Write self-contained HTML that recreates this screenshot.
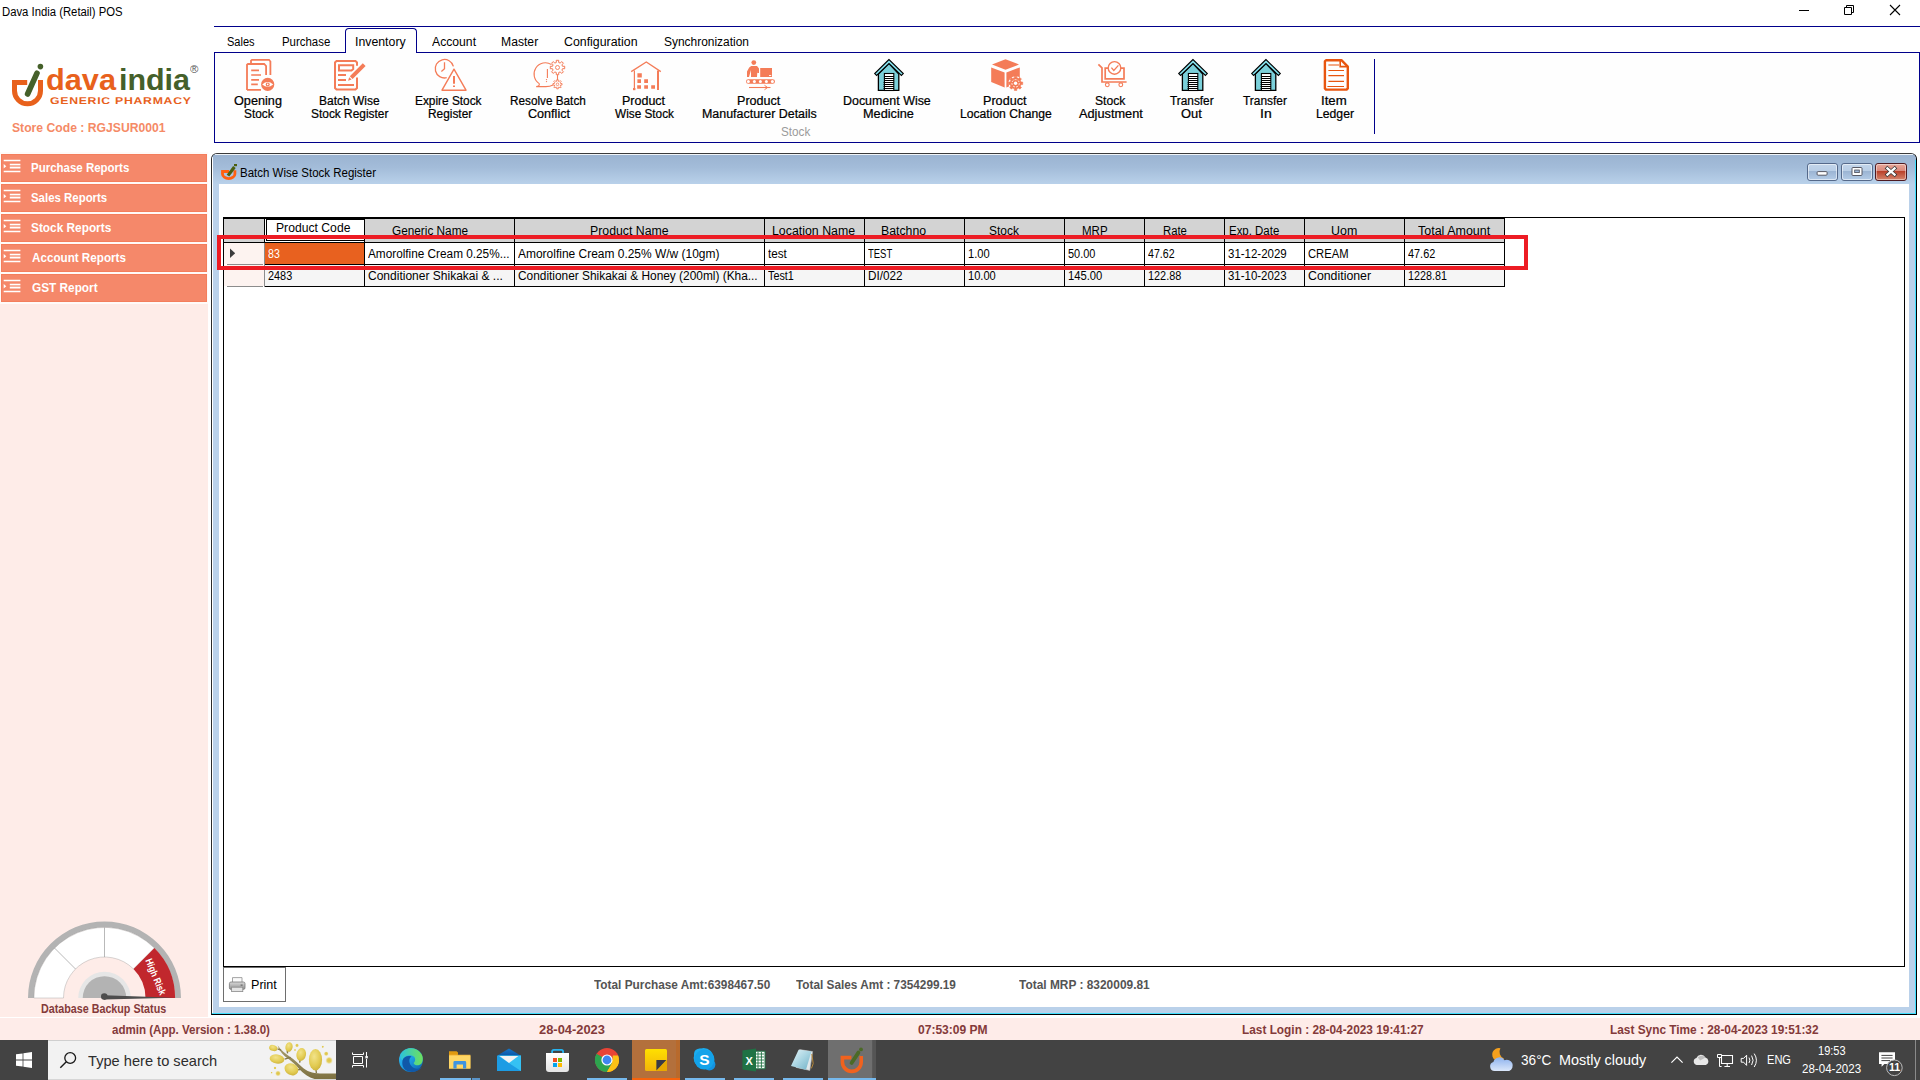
<!DOCTYPE html>
<html lang="en">
<head>
<meta charset="utf-8">
<title>Dava India (Retail) POS</title>
<style>
*{box-sizing:border-box;margin:0;padding:0}
html,body{width:1920px;height:1080px;overflow:hidden;background:#fff}
body{position:relative;font-family:'Liberation Sans',sans-serif;font-size:12px;color:#000}
div,span,svg{position:absolute}
.t{white-space:pre;line-height:1;transform-origin:0 0;display:block}
svg{overflow:visible}
/* title bar */
#titlebar{left:0;top:0;width:1920px;height:26px;background:#fff}
/* ribbon */
#ribbon{left:214px;top:26px;width:1706px;height:117px}
#ribbon .topline{left:0;top:0;width:1706px;height:1px;background:#00008b}
#ribbon .panel{left:0;top:26px;width:1706px;height:91px;border:1px solid #00008b;background:#fefefe}
#ribbon .tabsel{left:131px;top:2px;width:72px;height:25px;border:1px solid #00008b;border-bottom:none;border-radius:4px 4px 0 0;background:#fefefe}
#ribbon .sep{left:1160px;top:33px;width:1px;height:75px;background:#00008b}
/* sidebar */
#sidebar{left:0;top:152px;width:208px;height:865px;background:#feece8}
#sidebar .topfill{left:0;top:0;width:208px;height:152px;background:#fffaf8}
.navbtn{left:1px;width:206px;height:28px;background:#f5886a;border:1px solid #f47e5c}
/* mdi */
#mdi{left:211px;top:153px;width:1706px;height:862px;border:1px solid #000;border-top-color:#3b3b3b;border-left-color:#2b2b2b;border-radius:6px 6px 0 0;background:#bad1ea;overflow:hidden}
#mdi .cap{left:0;top:0;width:1704px;height:30px;background:linear-gradient(#9ab3d1 0%,#a3bcd9 45%,#b9d1ea 100%)}
#mdi .hl{left:3px;top:0;width:1698px;height:1px;background:rgba(255,255,255,.85)}
#mdi .hl-l{left:0;top:3px;width:1px;height:858px;background:#fff}
#mdi .cy-r{right:0;top:6px;width:1px;height:856px;background:#3fe0ff}
#mdi .cy-b{left:0;bottom:0;width:1704px;height:1px;background:#3fe0ff}
#mdi .client{left:7px;top:30px;width:1690px;height:823px;background:#fff}
/* grid */
#grid{left:4px;top:33px;width:1682px;height:750px;border:1px solid #000;background:#fff}
.hc{top:1px;height:23px;background:#d3d3d3;border-right:1px solid #000}
.cell{height:21px;border-right:1px solid #000}
/* status */
#status{left:0;top:1018px;width:1920px;height:22px;background:#feece9}
/* taskbar */
#taskbar{left:0;top:1040px;width:1920px;height:40px;background:#434343}
#search{left:48px;top:0;width:288px;height:40px;background:#f2f2f2;border-top:1px solid #cfcfcf;border-bottom:1px solid #d6d6d6;overflow:hidden}
.run{top:38px;height:2px;background:#76b9ed}

</style>
</head>
<body>
<div id="titlebar">
<span class="t" style="left:2.00px;top:6.00px;font-size:12px;transform:scaleX(0.9421);">Dava India (Retail) POS</span>
<svg style="left:1790px;top:0px" width="120" height="22" viewBox="1790 0 120 22" ><path d="M1799 10.5h10" stroke="#000" stroke-width="1" fill="none"/><path d="M1844.5 7.5h7v7h-7zM1846.5 7.5v-2h7v7h-2" stroke="#000" stroke-width="1" fill="none"/><path d="M1890 5l10 10M1900 5l-10 10" stroke="#000" stroke-width="1.1" fill="none"/></svg>
</div>
<div id="logo" style="left:0;top:56px;width:212px;height:86px">
<svg style="left:8px;top:4px" width="40" height="50" viewBox="8 60 40 50" ><path d="M27.2 82.5H14.5V90.8A13 13 0 0 0 40.5 90.8V80" fill="none" stroke="#e8611c" stroke-width="5"/><path d="M27.6 94L37 73.2" fill="none" stroke="#45602a" stroke-width="5.6" stroke-linecap="round"/><circle cx="40.4" cy="66.6" r="2.8" fill="#45602a"/></svg>
<span class="t" style="left:46.10px;top:8.85px;font-size:29.5px;font-weight:700;color:#e8611c;transform:scaleX(1.0414);">dava</span>
<span class="t" style="left:118.68px;top:8.85px;font-size:29.5px;font-weight:700;color:#45602a;transform:scaleX(1.0312);">india</span>
<span class="t" style="left:49.79px;top:41.00px;font-size:9.8px;font-weight:700;color:#e8611c;letter-spacing:0.582px;transform:scale(1.2500,1.0000);text-rendering:geometricPrecision;">GENERIC PHARMACY</span>
<span class="t" style="left:190.19px;top:9.30px;font-size:10px;color:#555;transform:scaleX(1.1400);">®</span>
<span class="t" style="left:12.05px;top:65.45px;font-size:13.3px;font-weight:700;color:#f58a66;transform:scaleX(0.9153);">Store Code : RGJSUR0001</span>
</div>
<div id="ribbon">
<div class="topline"></div>
<div class="panel"></div>
<div class="tabsel"></div>
<span class="t" style="left:13.11px;top:10.00px;font-size:12px;transform:scaleX(0.9208);">Sales</span>
<span class="t" style="left:67.99px;top:10.00px;font-size:12px;transform:scaleX(0.9513);">Purchase</span>
<span class="t" style="left:140.97px;top:10.00px;font-size:12px;transform:scaleX(1.0259);">Inventory</span>
<span class="t" style="left:218.07px;top:10.00px;font-size:12px;transform:scaleX(1.0152);">Account</span>
<span class="t" style="left:287.02px;top:10.00px;font-size:12px;transform:scaleX(1.0140);">Master</span>
<span class="t" style="left:350.27px;top:10.00px;font-size:12px;transform:scaleX(1.0305);">Configuration</span>
<span class="t" style="left:449.95px;top:10.00px;font-size:12px;transform:scaleX(0.9951);">Synchronization</span>
<div class="rb" style="left:19px;top:30px;width:51px;height:66px">
<svg style="left:10px;top:2px" width="34" height="34" viewBox="243 58 34 34" ><path d="M251 63.5V60.6L252 59.8H269L270.4 61.5V75" fill="none" stroke="#f47c58" stroke-width="1.8" /><path d="M247 90V64.8L248 64H264.2L266.1 66V75M247 89.8H261" fill="none" stroke="#f47c58" stroke-width="1.8" /><path d="M251.2 70.3H259M251.2 75H261M251.2 79.8H259M251.2 84.3H257.8" fill="none" stroke="#f47c58" stroke-width="1.7" /><circle cx="267.7" cy="84.4" r="6.6" fill="#f47c58"/><path d="M262.2 84.4Q267.7 79.6 273.2 84.4Q267.7 89.2 262.2 84.4Z" fill="#fff"/><circle cx="267.7" cy="84.4" r="2" fill="#f47c58"/><circle cx="267.7" cy="84.4" r="0.8" fill="#fff"/></svg>
<span class="t" style="left:1.41px;top:38.70px;font-size:12px;-webkit-text-stroke:0.22px #000;transform:scaleX(1.0565);">Opening</span>
<span class="t" style="left:10.75px;top:51.70px;font-size:12px;-webkit-text-stroke:0.22px #000;transform:scaleX(0.9877);">Stock</span>
</div>
<div class="rb" style="left:95px;top:30px;width:81px;height:66px">
<svg style="left:24px;top:2px" width="34" height="34" viewBox="333 58 34 34" ><path d="M357 65.8V62.5L355.5 61H336.5L335 62.5V88L336.5 89.5H355.5L357 88V77.4" fill="none" stroke="#f47c58" stroke-width="2" /><path d="M339 65.2H353.2V69L351.5 70.5H339Z" fill="none" stroke="#f47c58" stroke-width="2" /><path d="M338 75H346M338 80H346M338 85H354" fill="none" stroke="#f47c58" stroke-width="2" /><path d="M349.8 76.2L362.8 63.2L365.6 66L352.6 79Z" fill="#f47c58" /><path d="M349.2 77.2L351.6 79.6L348.1 80.8Z" fill="#f47c58" /></svg>
<span class="t" style="left:9.96px;top:38.70px;font-size:12px;-webkit-text-stroke:0.22px #000;transform:scaleX(0.9993);">Batch Wise</span>
<span class="t" style="left:1.96px;top:51.70px;font-size:12px;-webkit-text-stroke:0.22px #000;transform:scaleX(0.9928);">Stock Register</span>
</div>
<div class="rb" style="left:200px;top:30px;width:70px;height:66px">
<svg style="left:21px;top:2px" width="34" height="34" viewBox="435 58 34 34" ><path d="M453.4 66.3A9.25 9.25 0 1 0 446.7 77.7" fill="none" stroke="#f47c58" stroke-width="1.3" /><path d="M444.5 62.2V68.8L441.4 71.5" fill="none" stroke="#f47c58" stroke-width="1.3" /><path d="M454 69.2L442 90.2H466L454 69.2Z" fill="none" stroke="#f47c58" stroke-width="1.4" stroke-linejoin="round"/><path d="M454 76V83.8" fill="none" stroke="#f47c58" stroke-width="2" /><path d="M454 85.6V87" fill="none" stroke="#f47c58" stroke-width="2" /></svg>
<span class="t" style="left:1.08px;top:38.70px;font-size:12px;-webkit-text-stroke:0.22px #000;transform:scaleX(0.9877);">Expire Stock</span>
<span class="t" style="left:13.89px;top:51.70px;font-size:12px;-webkit-text-stroke:0.22px #000;transform:scaleX(0.9889);">Register</span>
</div>
<div class="rb" style="left:295px;top:30px;width:79px;height:66px">
<svg style="left:23px;top:2px" width="34" height="34" viewBox="532 58 34 34" ><path d="M551.5 64.6A11.3 11.3 0 0 0 539.2 83.6Q540 86 536.2 86.6H544Q549.5 87 553 85" fill="none" stroke="#f47c58" stroke-width="1.1" /><path d="M547.4 69V78" fill="none" stroke="#f47c58" stroke-width="1.1" /><circle cx="546.5" cy="79.6" r=".7" fill="#f47c58"/><circle cx="546.5" cy="81.6" r=".7" fill="#f47c58"/><path d="M564.69 66.24L564.69 68.76L562.57 68.63L561.89 70.29L563.47 71.70L561.70 73.47L560.29 71.89L558.63 72.57L558.76 74.69L556.24 74.69L556.37 72.57L554.71 71.89L553.30 73.47L551.53 71.70L553.11 70.29L552.43 68.63L550.31 68.76L550.31 66.24L552.43 66.37L553.11 64.71L551.53 63.30L553.30 61.53L554.71 63.11L556.37 62.43L556.24 60.31L558.76 60.31L558.63 62.43L560.29 63.11L561.70 61.53L563.47 63.30L561.89 64.71L562.57 66.37Z" fill="none" stroke="#f47c58" stroke-width="1" stroke-linejoin="round"/><circle cx="557.5" cy="67.5" r="2" fill="none" stroke="#f47c58" stroke-width=".9"/><path d="M557.5 74.8V80" fill="none" stroke="#f47c58" stroke-width="1.1" /><path d="M562.03 83.51L562.03 85.09L560.62 85.00L560.20 86.01L561.26 86.95L560.15 88.06L559.21 87.00L558.20 87.42L558.29 88.83L556.71 88.83L556.80 87.42L555.79 87.00L554.85 88.06L553.74 86.95L554.80 86.01L554.38 85.00L552.97 85.09L552.97 83.51L554.38 83.60L554.80 82.59L553.74 81.65L554.85 80.54L555.79 81.60L556.80 81.18L556.71 79.77L558.29 79.77L558.20 81.18L559.21 81.60L560.15 80.54L561.26 81.65L560.20 82.59L560.62 83.60Z" fill="none" stroke="#f47c58" stroke-width="0.9" stroke-linejoin="round"/><circle cx="557.5" cy="84.3" r="1.3" fill="none" stroke="#f47c58" stroke-width=".8"/></svg>
<span class="t" style="left:1.10px;top:38.70px;font-size:12px;-webkit-text-stroke:0.22px #000;transform:scaleX(0.9796);">Resolve Batch</span>
<span class="t" style="left:18.62px;top:51.70px;font-size:12px;-webkit-text-stroke:0.22px #000;transform:scaleX(1.0500);">Conflict</span>
</div>
<div class="rb" style="left:399px;top:30px;width:63px;height:66px">
<svg style="left:17px;top:2px" width="34" height="34" viewBox="630 58 34 34" ><path d="M631.2 71.6L646.3 62L660.8 71.6" fill="none" stroke="#f47c58" stroke-width="1.3" /><path d="M634.4 70.4V90" fill="none" stroke="#f47c58" stroke-width="1.2" /><path d="M658 70.4V90" fill="none" stroke="#f47c58" stroke-width="2" /><path d="M637.4 73.2H641.8V77.6H637.4ZM637.4 79.2H641V83H637.4ZM644.2 79.2H648V83H644.2ZM637.2 85.2H641V88.8H637.2ZM644.2 85.2H648V88.8H644.2ZM651.2 85.2H655V88.8H651.2Z" fill="#f47c58" /><path d="M633 88h2.4v2.2H633z" fill="#f47c58" /></svg>
<span class="t" style="left:8.99px;top:38.70px;font-size:12px;-webkit-text-stroke:0.22px #000;transform:scaleX(1.0413);">Product</span>
<span class="t" style="left:1.77px;top:51.70px;font-size:12px;-webkit-text-stroke:0.22px #000;transform:scaleX(0.9823);">Wise Stock</span>
</div>
<div class="rb" style="left:486px;top:30px;width:118px;height:66px">
<svg style="left:45px;top:2px" width="34" height="34" viewBox="745 58 34 34" ><circle cx="753.8" cy="62.6" r="2.4" fill="#f47c58"/><path d="M751.2 66H757L759 68.5V73H757.4V70.5L757 77H751V70L749 77H747V71.5L749.2 67.4Z" fill="#f47c58" /><path d="M760.2 68H772V77H760.2Z" fill="#f47c58" /><rect x="769" y="75" width="2.2" height=".9" fill="#fff"/><rect x="746" y="79.2" width="29" height="4.6" rx="2.3" fill="#f47c58"/><circle cx="748.4" cy="81.4" r="1.5" fill="#fff"/><circle cx="754.4" cy="81.4" r="1.5" fill="#fff"/><circle cx="760.4" cy="81.4" r="1.5" fill="#fff"/><circle cx="766.4" cy="81.4" r="1.5" fill="#fff"/><circle cx="772.4" cy="81.4" r="1.5" fill="#fff"/><path d="M749 87.5H770.5" fill="none" stroke="#f47c58" stroke-width="1.1" /><path d="M764.5 85.3L767.6 87.5L764.5 89.7" fill="none" stroke="#f47c58" stroke-width="1" /></svg>
<span class="t" style="left:36.77px;top:38.70px;font-size:12px;-webkit-text-stroke:0.22px #000;transform:scaleX(1.0471);">Product</span>
<span class="t" style="left:1.87px;top:51.70px;font-size:12px;-webkit-text-stroke:0.22px #000;transform:scaleX(1.0365);">Manufacturer Details</span>
</div>
<div class="rb" style="left:628px;top:30px;width:91px;height:66px">
<svg style="left:31px;top:2px" width="34" height="34" viewBox="873 58 34 34" ><g transform="translate(0 0)"><path d="M878.4 74V90.4H898.8V74L889 63.6Z" fill="#7bd0da" stroke="#000" stroke-width="1.3" stroke-linejoin="miter"/><path d="M889 59.5L874.7 73.6L876.6 75.5L889 63.4L901.4 75.5L903.3 73.6Z" fill="#86e2ee" stroke="#000" stroke-width="1.1" stroke-linejoin="miter"/><rect x="884.4" y="73.5" width="9.4" height="17" fill="#fff" stroke="#000" stroke-width="1.1"/><path d="M884.2 76.5H894M884.2 78.5H894M884.2 80.5H894M883.6 82.5H894M883.6 84.5H894M883.6 86.5H894M883.6 88.5H894" stroke="#000" stroke-width="1" fill="none"/></g></svg>
<span class="t" style="left:1.39px;top:38.70px;font-size:12px;-webkit-text-stroke:0.22px #000;transform:scaleX(1.0364);">Document Wise</span>
<span class="t" style="left:20.86px;top:51.70px;font-size:12px;-webkit-text-stroke:0.22px #000;transform:scaleX(1.0587);">Medicine</span>
</div>
<div class="rb" style="left:744px;top:30px;width:95px;height:66px">
<svg style="left:32px;top:2px" width="34" height="34" viewBox="990 58 34 34" ><path d="M992 64.5L1005.5 59.2L1019 64.5L1005.5 69.8Z" fill="#f47c58" /><path d="M991.2 67.4L1004.6 72.6V87.6L991.2 82Z" fill="#f47c58" /><path d="M1006.4 72.6L1019.8 67.4V82L1006.4 87.6Z" fill="#f47c58" /><circle cx="1015.6" cy="83.3" r="7.1" fill="#fff"/><path d="M1022.69 82.06L1022.69 84.54L1021.07 84.52L1020.33 86.30L1021.49 87.44L1019.74 89.19L1018.60 88.03L1016.82 88.77L1016.84 90.39L1014.36 90.39L1014.38 88.77L1012.60 88.03L1011.46 89.19L1009.71 87.44L1010.87 86.30L1010.13 84.52L1008.51 84.54L1008.51 82.06L1010.13 82.08L1010.87 80.30L1009.71 79.16L1011.46 77.41L1012.60 78.57L1014.38 77.83L1014.36 76.21L1016.84 76.21L1016.82 77.83L1018.60 78.57L1019.74 77.41L1021.49 79.16L1020.33 80.30L1021.07 82.08Z" fill="#f47c58" stroke="#f47c58" stroke-width="0.6" stroke-linejoin="round"/><circle cx="1015.6" cy="83.3" r="3.7" fill="none" stroke="#fff" stroke-width=".8" stroke-dasharray="2 1.2"/><circle cx="1015.6" cy="83.3" r="1.7" fill="#fff"/></svg>
<span class="t" style="left:24.56px;top:38.70px;font-size:12px;-webkit-text-stroke:0.22px #000;transform:scaleX(1.0511);">Product</span>
<span class="t" style="left:2.25px;top:51.70px;font-size:12px;-webkit-text-stroke:0.22px #000;transform:scaleX(1.0111);">Location Change</span>
</div>
<div class="rb" style="left:863px;top:30px;width:68px;height:66px">
<svg style="left:18px;top:2px" width="34" height="34" viewBox="1095 58 34 34" ><path d="M1098.4 64.4L1102 67.8V82H1126.6" fill="none" stroke="#f47c58" stroke-width="1.7" /><path d="M1105.2 68.2H1124V78.8H1105.2Z" fill="none" stroke="#f47c58" stroke-width="1.7" /><circle cx="1114.5" cy="67.9" r="6.3" fill="#fff" stroke="#f47c58" stroke-width="1.4"/><path d="M1111.4 67.6L1113.8 70.4L1118.4 65.4" fill="none" stroke="#f47c58" stroke-width="1.3" /><circle cx="1107.3" cy="84.8" r="1.9" fill="#fff" stroke="#f47c58" stroke-width="1.1"/><circle cx="1120.8" cy="84.8" r="1.9" fill="#fff" stroke="#f47c58" stroke-width="1.1"/></svg>
<span class="t" style="left:17.93px;top:38.70px;font-size:12px;-webkit-text-stroke:0.22px #000;transform:scaleX(1.0106);">Stock</span>
<span class="t" style="left:2.05px;top:51.70px;font-size:12px;-webkit-text-stroke:0.22px #000;transform:scaleX(1.0629);">Adjustment</span>
</div>
<div class="rb" style="left:954px;top:30px;width:48px;height:66px">
<svg style="left:9px;top:2px" width="34" height="34" viewBox="1177 58 34 34" ><g transform="translate(304 0)"><path d="M878.4 74V90.4H898.8V74L889 63.6Z" fill="#7bd0da" stroke="#000" stroke-width="1.3" stroke-linejoin="miter"/><path d="M889 59.5L874.7 73.6L876.6 75.5L889 63.4L901.4 75.5L903.3 73.6Z" fill="#86e2ee" stroke="#000" stroke-width="1.1" stroke-linejoin="miter"/><rect x="884.4" y="73.5" width="9.4" height="17" fill="#fff" stroke="#000" stroke-width="1.1"/><path d="M884.2 76.5H894M884.2 78.5H894M884.2 80.5H894M883.6 82.5H894M883.6 84.5H894M883.6 86.5H894M883.6 88.5H894" stroke="#000" stroke-width="1" fill="none"/></g></svg>
<span class="t" style="left:2.33px;top:38.70px;font-size:12px;-webkit-text-stroke:0.22px #000;transform:scaleX(0.9868);">Transfer</span>
<span class="t" style="left:12.96px;top:51.70px;font-size:12px;-webkit-text-stroke:0.22px #000;transform:scaleX(1.0747);">Out</span>
</div>
<div class="rb" style="left:1027px;top:30px;width:48px;height:66px">
<svg style="left:9px;top:2px" width="34" height="34" viewBox="1250 58 34 34" ><g transform="translate(377 0)"><path d="M878.4 74V90.4H898.8V74L889 63.6Z" fill="#7bd0da" stroke="#000" stroke-width="1.3" stroke-linejoin="miter"/><path d="M889 59.5L874.7 73.6L876.6 75.5L889 63.4L901.4 75.5L903.3 73.6Z" fill="#86e2ee" stroke="#000" stroke-width="1.1" stroke-linejoin="miter"/><rect x="884.4" y="73.5" width="9.4" height="17" fill="#fff" stroke="#000" stroke-width="1.1"/><path d="M884.2 76.5H894M884.2 78.5H894M884.2 80.5H894M883.6 82.5H894M883.6 84.5H894M883.6 86.5H894M883.6 88.5H894" stroke="#000" stroke-width="1" fill="none"/></g></svg>
<span class="t" style="left:2.13px;top:38.70px;font-size:12px;-webkit-text-stroke:0.22px #000;transform:scaleX(0.9936);">Transfer</span>
<span class="t" style="left:19.02px;top:51.70px;font-size:12px;-webkit-text-stroke:0.22px #000;transform:scaleX(1.1645);">In</span>
</div>
<div class="rb" style="left:1100px;top:30px;width:42px;height:66px">
<svg style="left:6px;top:2px" width="34" height="34" viewBox="1320 58 34 34" ><path d="M1341.4 60.2H1326L1324.9 61.4V88.4L1326 89.6H1346.6L1347.8 88.4V66.6Z" fill="none" stroke="#e8550f" stroke-width="2.4" stroke-linejoin="round"/><path d="M1340.2 60.4V66.6H1347.6" fill="none" stroke="#e8550f" stroke-width="1.6" /><path d="M1328.4 65H1339M1328.4 70.5H1344M1328.4 75.7H1344M1328.4 81.3H1344M1327.4 86.5H1344" fill="none" stroke="#e8550f" stroke-width="1.2" /></svg>
<span class="t" style="left:7.06px;top:38.70px;font-size:12px;-webkit-text-stroke:0.22px #000;transform:scaleX(1.1001);">Item</span>
<span class="t" style="left:2.22px;top:51.70px;font-size:12px;-webkit-text-stroke:0.22px #000;transform:scaleX(1.0174);">Ledger</span>
</div>
<span class="t" style="left:566.53px;top:100.00px;font-size:12px;color:#9a9a9a;transform:scaleX(0.9750);">Stock</span>
<div class="sep"></div>
</div>
<div id="sidebar">
<div class="topfill"></div>
<div class="navbtn" style="top:2px">
<svg style="left:1px;top:3px" width="18" height="16" viewBox="3 158 18 16" ><path d="M3.7 160.5 H20.4 M9.8 164.5 H20.4 M9.8 167.6 H20.4 M3.7 171.5 H20.4" stroke="#fff" stroke-width="1.6" fill="none"/><path d="M9.8 166 H20.4" stroke="#fff" stroke-opacity=".3" stroke-width="1" fill="none"/><path d="M3.7 163.9 L6.3 166.2 L3.7 168.5 Z" fill="#fff"/></svg>
<span class="t" style="left:28.93px;top:5.85px;font-size:13.3px;font-weight:700;color:#fff;transform:scaleX(0.8638);">Purchase Reports</span>
</div>
<div class="navbtn" style="top:32px">
<svg style="left:1px;top:3px" width="18" height="16" viewBox="3 188 18 16" ><path d="M3.7 190.5 H20.4 M9.8 194.5 H20.4 M9.8 197.6 H20.4 M3.7 201.5 H20.4" stroke="#fff" stroke-width="1.6" fill="none"/><path d="M9.8 196 H20.4" stroke="#fff" stroke-opacity=".3" stroke-width="1" fill="none"/><path d="M3.7 193.9 L6.3 196.2 L3.7 198.5 Z" fill="#fff"/></svg>
<span class="t" style="left:29.11px;top:5.85px;font-size:13.3px;font-weight:700;color:#fff;transform:scaleX(0.8594);">Sales Reports</span>
</div>
<div class="navbtn" style="top:62px">
<svg style="left:1px;top:3px" width="18" height="16" viewBox="3 218 18 16" ><path d="M3.7 220.5 H20.4 M9.8 224.5 H20.4 M9.8 227.6 H20.4 M3.7 231.5 H20.4" stroke="#fff" stroke-width="1.6" fill="none"/><path d="M9.8 226 H20.4" stroke="#fff" stroke-opacity=".3" stroke-width="1" fill="none"/><path d="M3.7 223.9 L6.3 226.2 L3.7 228.5 Z" fill="#fff"/></svg>
<span class="t" style="left:29.06px;top:5.85px;font-size:13.3px;font-weight:700;color:#fff;transform:scaleX(0.8902);">Stock Reports</span>
</div>
<div class="navbtn" style="top:92px">
<svg style="left:1px;top:3px" width="18" height="16" viewBox="3 248 18 16" ><path d="M3.7 250.5 H20.4 M9.8 254.5 H20.4 M9.8 257.6 H20.4 M3.7 261.5 H20.4" stroke="#fff" stroke-width="1.6" fill="none"/><path d="M9.8 256 H20.4" stroke="#fff" stroke-opacity=".3" stroke-width="1" fill="none"/><path d="M3.7 253.9 L6.3 256.2 L3.7 258.5 Z" fill="#fff"/></svg>
<span class="t" style="left:29.69px;top:5.85px;font-size:13.3px;font-weight:700;color:#fff;transform:scaleX(0.8768);">Account Reports</span>
</div>
<div class="navbtn" style="top:122px">
<svg style="left:1px;top:3px" width="18" height="16" viewBox="3 278 18 16" ><path d="M3.7 280.5 H20.4 M9.8 284.5 H20.4 M9.8 287.6 H20.4 M3.7 291.5 H20.4" stroke="#fff" stroke-width="1.6" fill="none"/><path d="M9.8 286 H20.4" stroke="#fff" stroke-opacity=".3" stroke-width="1" fill="none"/><path d="M3.7 283.9 L6.3 286.2 L3.7 288.5 Z" fill="#fff"/></svg>
<span class="t" style="left:29.58px;top:5.85px;font-size:13.3px;font-weight:700;color:#fff;transform:scaleX(0.8881);">GST Report</span>
</div>
<svg style="left:20px;top:763px" width="170" height="90" viewBox="20 915 170 90" ><path d="M28.00 998.00A76.5 76.5 0 0 1 181.00 998.00L175.00 998.00A70.5 70.5 0 0 0 34.00 998.00Z" fill="#b3b3b3" /><path d="M33.90 998.00A70.6 70.6 0 0 1 154.42 948.08L133.49 969.01A41 41 0 0 0 63.50 998.00Z" fill="#fff" stroke="#9a9a9a" stroke-width=".4"/><path d="M154.42 948.08A70.6 70.6 0 0 1 175.10 998.00L145.50 998.00A41 41 0 0 0 133.49 969.01Z" fill="#c1272d" /><path d="M75.51 969.01L54.65 948.15" stroke="#8a8a8a" stroke-width=".6"/><path d="M104.50 957.00L104.50 927.50" stroke="#8a8a8a" stroke-width=".6"/><path d="M78.20 998.00A26.3 26.3 0 0 1 130.80 998.00L104.50 998.00A0 0 0 0 0 104.50 998.00Z" fill="#e6e6e6" /><path d="M82.70 998.00A21.8 21.8 0 0 1 126.30 998.00L104.50 998.00A0 0 0 0 0 104.50 998.00Z" fill="#b3b3b3" /><path d="M104.5 995.2L174.5 997.8L104.5 999.6Z" fill="#4d4d4d"/><circle cx="104.3" cy="996.6" r="3.3" fill="#4d4d4d"/><text x="155.78" y="976.76" transform="rotate(67.5 155.78 976.76)" text-anchor="middle" font-family="'Liberation Sans',sans-serif" font-size="10" font-weight="700" fill="#fff" textLength="38.5" lengthAdjust="spacingAndGlyphs" dy="3.5">High Risk</text></svg>
<span class="t" style="left:41.08px;top:850.80px;font-size:12px;font-weight:700;color:#843a3a;transform:scaleX(0.8937);">Database Backup Status</span>
</div>
<div id="mdi">
<div class="cap"></div><div class="hl"></div><div class="hl-l"></div>
<div class="client">
<div id="grid">
<div style="left:0;top:0;width:1281px;height:1px;background:#000"></div>
<div class="hc" style="left:0px;width:41px">
</div>
<div class="hc" style="left:41px;width:100px">
<div style="left:0;top:0;width:99px;height:23px;background:#fff"></div>
<div style="left:1px;top:0;width:99px;height:22px;background:#fff;border:1px solid #000"></div>
<span class="t" style="left:11.03px;top:3.00px;font-size:12px;transform:scaleX(1.0141);">Product Code</span>
</div>
<div class="hc" style="left:141px;width:150px">
<span class="t" style="left:26.94px;top:5.70px;font-size:12px;transform:scaleX(0.9832);">Generic Name</span>
</div>
<div class="hc" style="left:291px;width:250px">
<span class="t" style="left:75.43px;top:5.70px;font-size:12px;transform:scaleX(1.0254);">Product Name</span>
</div>
<div class="hc" style="left:541px;width:100px">
<span class="t" style="left:7.19px;top:5.70px;font-size:12px;transform:scaleX(1.0300);">Location Name</span>
</div>
<div class="hc" style="left:641px;width:100px">
<span class="t" style="left:16.20px;top:5.70px;font-size:12px;transform:scaleX(1.0230);">Batchno</span>
</div>
<div class="hc" style="left:741px;width:100px">
<span class="t" style="left:23.92px;top:5.70px;font-size:12px;transform:scaleX(0.9966);">Stock</span>
</div>
<div class="hc" style="left:841px;width:80px">
<span class="t" style="left:16.51px;top:5.70px;font-size:12px;transform:scaleX(0.9608);">MRP</span>
</div>
<div class="hc" style="left:921px;width:80px">
<span class="t" style="left:17.88px;top:5.70px;font-size:12px;transform:scaleX(0.9438);">Rate</span>
</div>
<div class="hc" style="left:1001px;width:80px">
<span class="t" style="left:4.09px;top:5.70px;font-size:12px;transform:scaleX(0.9545);">Exp. Date</span>
</div>
<div class="hc" style="left:1081px;width:100px">
<span class="t" style="left:25.68px;top:5.70px;font-size:12px;transform:scaleX(1.0374);">Uom</span>
</div>
<div class="hc" style="left:1181px;width:100px">
<span class="t" style="left:13.13px;top:5.70px;font-size:12px;transform:scaleX(1.0408);">Total Amount</span>
</div>
<div style="left:0;top:24px;width:1281px;height:1px;background:#000"></div>
<div class="row" style="left:0;top:25px;width:1281px;height:22px">
<div style="left:0;top:0;width:40px;height:21px;background:#fdf3f0"></div>
<div style="left:40px;top:0;width:1px;height:22px;background:#8c8c8c"></div>
<div style="left:3px;top:21px;width:36px;height:1px;background:#8c8c8c"></div>
<svg style="left:5px;top:5px" width="8" height="12" viewBox="229 248 8 12" ><path d="M230 248.5l5.2 4.7-5.2 4.7z" fill="#3c3c3c"/></svg>
<div class="cell" style="left:41px;top:0;width:100px;background:#e8611f">
<span class="t" style="left:2.80px;top:4.80px;font-size:12px;color:#fff;transform:scaleX(0.8818);">83</span>
</div>
<div class="cell" style="left:141px;top:0;width:150px;background:#fff">
<span class="t" style="left:3.35px;top:4.80px;font-size:12px;transform:scaleX(0.9821);">Amorolfine Cream 0.25%...</span>
</div>
<div class="cell" style="left:291px;top:0;width:250px;background:#fff">
<span class="t" style="left:3.35px;top:4.80px;font-size:12px;transform:scaleX(0.9970);">Amorolfine Cream 0.25% W/w (10gm)</span>
</div>
<div class="cell" style="left:541px;top:0;width:100px;background:#fff">
<span class="t" style="left:3.19px;top:4.80px;font-size:12px;transform:scaleX(0.9757);">test</span>
</div>
<div class="cell" style="left:641px;top:0;width:100px;background:#fff">
<span class="t" style="left:3.47px;top:4.80px;font-size:12px;transform:scaleX(0.7902);">TEST</span>
</div>
<div class="cell" style="left:741px;top:0;width:100px;background:#fff">
<span class="t" style="left:2.72px;top:4.80px;font-size:12px;transform:scaleX(0.9264);">1.00</span>
</div>
<div class="cell" style="left:841px;top:0;width:80px;background:#fff">
<span class="t" style="left:3.12px;top:4.80px;font-size:12px;transform:scaleX(0.9122);">50.00</span>
</div>
<div class="cell" style="left:921px;top:0;width:80px;background:#fff">
<span class="t" style="left:3.38px;top:4.80px;font-size:12px;transform:scaleX(0.8851);">47.62</span>
</div>
<div class="cell" style="left:1001px;top:0;width:80px;background:#fff">
<span class="t" style="left:3.15px;top:4.80px;font-size:12px;transform:scaleX(0.9566);">31-12-2029</span>
</div>
<div class="cell" style="left:1081px;top:0;width:100px;background:#fff">
<span class="t" style="left:2.53px;top:4.80px;font-size:12px;transform:scaleX(0.9339);">CREAM</span>
</div>
<div class="cell" style="left:1181px;top:0;width:100px;background:#fff">
<span class="t" style="left:3.35px;top:4.80px;font-size:12px;transform:scaleX(0.9071);">47.62</span>
</div>
<div style="left:41px;top:21px;width:1240px;height:1px;background:#000"></div>
</div>
<div class="row" style="left:0;top:47px;width:1281px;height:22px">
<div style="left:0;top:0;width:40px;height:21px;background:#fdf3f0"></div>
<div style="left:40px;top:0;width:1px;height:22px;background:#8c8c8c"></div>
<div style="left:3px;top:21px;width:36px;height:1px;background:#8c8c8c"></div>
<div class="cell" style="left:41px;top:0;width:100px;background:#f5f5f5">
<span class="t" style="left:2.92px;top:5.00px;font-size:12px;transform:scaleX(0.9070);">2483</span>
</div>
<div class="cell" style="left:141px;top:0;width:150px;background:#f5f5f5">
<span class="t" style="left:3.34px;top:5.00px;font-size:12px;transform:scaleX(1.0011);">Conditioner Shikakai &amp; ...</span>
</div>
<div class="cell" style="left:291px;top:0;width:250px;background:#f5f5f5">
<span class="t" style="left:2.89px;top:5.00px;font-size:12px;transform:scaleX(0.9899);">Conditioner Shikakai &amp; Honey (200ml) (Kha...</span>
</div>
<div class="cell" style="left:541px;top:0;width:100px;background:#f5f5f5">
<span class="t" style="left:3.40px;top:5.00px;font-size:12px;transform:scaleX(0.9005);">Test1</span>
</div>
<div class="cell" style="left:641px;top:0;width:100px;background:#f5f5f5">
<span class="t" style="left:2.51px;top:5.00px;font-size:12px;transform:scaleX(0.9762);">DI/022</span>
</div>
<div class="cell" style="left:741px;top:0;width:100px;background:#f5f5f5">
<span class="t" style="left:2.74px;top:5.00px;font-size:12px;transform:scaleX(0.9233);">10.00</span>
</div>
<div class="cell" style="left:841px;top:0;width:80px;background:#f5f5f5">
<span class="t" style="left:2.72px;top:5.00px;font-size:12px;transform:scaleX(0.9361);">145.00</span>
</div>
<div class="cell" style="left:921px;top:0;width:80px;background:#f5f5f5">
<span class="t" style="left:2.81px;top:5.00px;font-size:12px;transform:scaleX(0.9070);">122.88</span>
</div>
<div class="cell" style="left:1001px;top:0;width:80px;background:#f5f5f5">
<span class="t" style="left:3.16px;top:5.00px;font-size:12px;transform:scaleX(0.9530);">31-10-2023</span>
</div>
<div class="cell" style="left:1081px;top:0;width:100px;background:#f5f5f5">
<span class="t" style="left:3.27px;top:5.00px;font-size:12px;transform:scaleX(1.0276);">Conditioner</span>
</div>
<div class="cell" style="left:1181px;top:0;width:100px;background:#f5f5f5">
<span class="t" style="left:2.83px;top:5.00px;font-size:12px;transform:scaleX(0.8964);">1228.81</span>
</div>
<div style="left:41px;top:21px;width:1240px;height:1px;background:#000"></div>
</div>
</div>
<div id="mark" style="left:-2px;top:51px;width:1311px;height:35px;border:4px solid #ed1c24"></div>
<div id="print" style="left:4px;top:783px;width:63px;height:35px;border:1px solid #6e6e6e;background:#fff">
<svg style="left:5px;top:8px" width="18" height="18" viewBox="229 976 18 18" ><linearGradient id="gp" x1="0" y1="0" x2="0" y2="1"><stop offset="0" stop-color="#d8d8d8"/><stop offset="1" stop-color="#8f8f8f"/></linearGradient><path d="M232.5 982.5V977.6H242V982.5" fill="#fafafa" stroke="#9a9a9a" stroke-width=".9"/><rect x="229.4" y="982" width="15.6" height="7.4" rx="1.6" fill="url(#gp)" stroke="#7a7a7a" stroke-width=".8"/><rect x="231.6" y="987.2" width="11.2" height="4.4" fill="#e4e4e4" stroke="#8a8a8a" stroke-width=".8"/><rect x="240.6" y="984.6" width="2" height="1" fill="#555"/></svg>
<span class="t" style="left:27.39px;top:10.80px;font-size:12px;transform:scaleX(1.0477);">Print</span>
</div>
<span class="t" style="left:374.91px;top:795.30px;font-size:12px;font-weight:700;color:#545454;transform:scaleX(0.9858);">Total Purchase Amt:6398467.50</span>
<span class="t" style="left:577.02px;top:795.30px;font-size:12px;font-weight:700;color:#545454;transform:scaleX(0.9824);">Total Sales Amt : 7354299.19</span>
<span class="t" style="left:800.42px;top:795.30px;font-size:12px;font-weight:700;color:#545454;transform:scaleX(0.9930);">Total MRP : 8320009.81</span>
</div>
<div class="cy-r"></div><div class="cy-b"></div>
<svg style="left:8px;top:8px" width="18" height="20" viewBox="220 162 18 20" ><path d="M229 171.5H222.5V174A6.2 4.6 0 0 0 234.9 174V170.2" fill="none" stroke="#ff6010" stroke-width="2.8"/><path d="M228 175.6L234.4 167" stroke="#4b5f0f" stroke-width="3.2" stroke-linecap="butt" fill="none"/><rect x="234" y="164" width="3" height="2.2" fill="#4b5f0f"/></svg>
<span class="t" style="left:28.09px;top:13.00px;font-size:12px;transform:scaleX(0.9575);">Batch Wise Stock Register</span>
<svg style="left:1594px;top:8px" width="102" height="20" viewBox="1806 162 102 20" ><linearGradient id="gb" x1="0" y1="0" x2="0" y2="1"><stop offset="0" stop-color="#c3d5ea"/><stop offset=".42" stop-color="#b9cee6"/><stop offset=".43" stop-color="#9ab3d2"/><stop offset="1" stop-color="#b5cde8"/></linearGradient><rect x="1807.5" y="163.5" width="30" height="17" rx="2.5" fill="url(#gb)" stroke="#55698a" stroke-width="1"/><rect x="1808.5" y="164.5" width="28" height="15" rx="1.8" fill="none" stroke="#fff" stroke-opacity=".55" stroke-width="1"/><rect x="1817.1" y="171.6" width="10" height="3.6" rx="1" fill="#fff" stroke="#4a4a55" stroke-width=".9"/><rect x="1841.5" y="163.5" width="31" height="17" rx="2.5" fill="url(#gb)" stroke="#55698a" stroke-width="1"/><rect x="1842.5" y="164.5" width="29" height="15" rx="1.8" fill="none" stroke="#fff" stroke-opacity=".55" stroke-width="1"/><rect x="1852" y="167.5" width="10" height="8" rx="1" fill="#fff" stroke="#4a4a55" stroke-width=".9"/><rect x="1854.7" y="170" width="4.6" height="2.6" fill="#9db6d6" stroke="#4a4a55" stroke-width=".8"/><linearGradient id="gx" x1="0" y1="0" x2="0" y2="1"><stop offset="0" stop-color="#e9a99b"/><stop offset=".45" stop-color="#d9867a"/><stop offset=".46" stop-color="#b9402a"/><stop offset="1" stop-color="#d78a72"/></linearGradient><rect x="1875.5" y="163.5" width="31" height="17" rx="2.5" fill="url(#gx)" stroke="#4d1a22" stroke-width="1"/><rect x="1876.5" y="164.5" width="29" height="15" rx="1.8" fill="none" stroke="#fff" stroke-opacity=".45" stroke-width="1"/><path d="M1887.4 168.4L1894.6 174.6M1894.6 168.4L1887.4 174.6" stroke="#3a3a3a" stroke-width="3.8" stroke-linecap="square" fill="none"/><path d="M1887.4 168.4L1894.6 174.6M1894.6 168.4L1887.4 174.6" stroke="#fff" stroke-width="2.2" stroke-linecap="square" fill="none"/></svg>
</div>
<div id="status">
<span class="t" style="left:111.76px;top:5.80px;font-size:12px;font-weight:700;color:#843a3a;transform:scaleX(0.9627);">admin (App. Version : 1.38.0)</span>
<span class="t" style="left:538.66px;top:5.80px;font-size:12px;font-weight:700;color:#843a3a;transform:scaleX(1.0741);">28-04-2023</span>
<span class="t" style="left:918.20px;top:5.80px;font-size:12px;font-weight:700;color:#843a3a;transform:scaleX(1.0042);">07:53:09 PM</span>
<span class="t" style="left:1241.89px;top:5.80px;font-size:12px;font-weight:700;color:#843a3a;transform:scaleX(0.9868);">Last Login : 28-04-2023 19:41:27</span>
<span class="t" style="left:1609.89px;top:5.80px;font-size:12px;font-weight:700;color:#843a3a;transform:scaleX(0.9872);">Last Sync Time : 28-04-2023 19:51:32</span>
</div>
<div id="taskbar">
<svg style="left:16px;top:12px" width="16" height="16" viewBox="16 1052 16 16" ><path d="M16 1054.3L22.6 1053.4V1059.6H16ZM23.4 1053.3L32 1052V1059.6H23.4ZM16 1060.4H22.6V1066.6L16 1065.7ZM23.4 1060.4H32V1068L23.4 1066.7Z" fill="#fff"/></svg>
<div id="search">
<svg style="left:10px;top:9px" width="20" height="20" viewBox="58 1050 20 20" ><circle cx="70.2" cy="1058" r="5.4" fill="none" stroke="#1a1a1a" stroke-width="1.3"/><path d="M66.3 1061.8L60.3 1067.8" stroke="#1a1a1a" stroke-width="1.4" fill="none"/></svg>
<span class="t" style="left:39.95px;top:11.60px;font-size:15px;color:#2d2d2d;transform:scaleX(0.9749);">Type here to search</span>
<svg style="left:218px;top:0px" width="70" height="39" viewBox="266 1041 70 39" ><radialGradient id="gbl" cx=".4" cy=".35" r=".75"><stop offset="0" stop-color="#f2e38a"/><stop offset=".6" stop-color="#e2cb52"/><stop offset="1" stop-color="#c9ae38"/></radialGradient><radialGradient id="gdot"><stop offset="0" stop-color="#dcc344"/><stop offset=".55" stop-color="#e3cd5e"/><stop offset="1" stop-color="#e9d97f" stop-opacity=".25"/></radialGradient><linearGradient id="gbr" x1="0" y1="0" x2="0" y2="1"><stop offset="0" stop-color="#a89d6c"/><stop offset="1" stop-color="#7c7040"/></linearGradient><path d="M277.6 1045.2C281 1050.5 285.5 1053.6 289.6 1056.4C294.6 1059.8 298.4 1063.6 302 1067C306.5 1071.2 312.5 1073.4 320 1073.5H336V1080H318.5C311 1078.6 304.5 1074.6 299.6 1069.4C295.8 1065.4 292.4 1061.6 288 1058.6C283.8 1055.8 279.6 1051.6 277.6 1045.2Z" fill="url(#gbr)"/><path d="M281 1050.2L277.6 1048.8M287.6 1053.4L287.2 1050.6M290.6 1057.4L284.6 1059.2M299.6 1062.6L300.2 1060M300.2 1069.6L297 1069.8M316.4 1073L316 1070" stroke="#857a4a" stroke-width="1.4" fill="none"/><ellipse cx="273.3" cy="1048" rx="4.3" ry="3" transform="rotate(18 273.3 1048)" fill="url(#gbl)"/><ellipse cx="289" cy="1047" rx="3.6" ry="4.9" transform="rotate(12 289 1047)" fill="url(#gbl)"/><ellipse cx="277" cy="1059" rx="7.4" ry="4.6" transform="rotate(8 277 1059)" fill="url(#gbl)"/><ellipse cx="301.2" cy="1054.5" rx="4.8" ry="6.5" transform="rotate(10 301.2 1054.5)" fill="url(#gbl)"/><ellipse cx="315.5" cy="1059.7" rx="6.6" ry="10.7" transform="rotate(0 315.5 1059.7)" fill="url(#gbl)"/><ellipse cx="291.4" cy="1069.3" rx="7.2" ry="5.8" transform="rotate(25 291.4 1069.3)" fill="url(#gbl)"/><circle cx="297" cy="1045.4" r="1.9" fill="url(#gdot)"/><circle cx="295" cy="1050" r="1.1" fill="url(#gdot)"/><circle cx="322.8" cy="1046.8" r="1.2" fill="url(#gdot)"/><circle cx="326.2" cy="1053.7" r="2.3" fill="url(#gdot)"/><circle cx="329.1" cy="1060.4" r="3.5" fill="url(#gdot)"/><circle cx="275" cy="1068" r="1.4" fill="url(#gdot)"/><circle cx="278" cy="1073.4" r="2.7" fill="url(#gdot)"/><circle cx="271.7" cy="1072.7" r="1" fill="url(#gdot)"/></svg>
</div>
<div class="ti" style="left:336px;top:0;width:48px;height:40px;"><svg style="left:0;top:0" width="48" height="40" viewBox="336 1040 48 40"><path d="M352.5 1052.5V1054.5H363.5V1052.5M352.5 1067.5V1065.5H363.5V1067.5M353.5 1056.5H362.5V1063.5H353.5ZM366.5 1052V1056M366.5 1059V1067.5" fill="none" stroke="#fff" stroke-width="1"/><rect x="365.4" y="1056" width="2.4" height="2.4" fill="#fff"/></svg></div>
<div class="ti" style="left:386px;top:0;width:49px;height:40px;"><svg style="left:0;top:0" width="49" height="40" viewBox="386 1040 49 40"><defs><linearGradient id="ge1" x1="0" y1="0" x2="1" y2="1"><stop offset="0" stop-color="#35c1f1"/><stop offset=".5" stop-color="#1b9de2"/><stop offset="1" stop-color="#0c59a4"/></linearGradient><linearGradient id="ge2" x1="0" y1="0" x2="1" y2="0"><stop offset="0" stop-color="#2cc3d9"/><stop offset="1" stop-color="#6ee15c"/></linearGradient></defs><circle cx="411" cy="1060" r="12" fill="url(#ge1)"/><path d="M400.5 1054.5C404 1048 412 1046.5 418 1050.5C423 1054 424 1059.5 421.5 1063.5C419.5 1066 414.5 1066 413.5 1063C416 1061 416 1056.5 411.5 1055.5C407 1054.6 403.5 1057 402.5 1060.5C400.5 1058.5 400 1056.5 400.5 1054.5Z" fill="url(#ge2)"/><path d="M402.5 1060.5C403.5 1057 407.5 1055.2 411.5 1056.5C409 1058 408.5 1062 411 1065.5C414 1069.5 419 1069.5 422 1067C419 1071.5 412 1073.5 406.5 1070.5C403 1068.5 401.8 1064.5 402.5 1060.5Z" fill="#1058a8"/></svg></div>
<div class="ti" style="left:435px;top:0;width:49px;height:40px;"><svg style="left:0;top:0" width="49" height="40" viewBox="435 1040 49 40"><path d="M449 1053.2H456.5L458 1054.8H470.4V1068.6H449Z" fill="#f5b93c"/><path d="M449 1051.2H456.6L458 1052.6V1054.8H449Z" fill="#e09a10"/><path d="M449 1055.6H470.4V1068.6H449Z" fill="#ffd766"/><path d="M453.4 1068.6V1062.4Q453.4 1061 454.8 1061H464.8Q466.2 1061 466.2 1062.4V1068.6H463V1064.4H456.6V1068.6Z" fill="#3f94e0"/></svg><div class="run" style="left:5px;width:31px;background:#76b9ed"></div></div>
<div class="run" style="left:472px;width:8px;background:#5a94c8"></div>
<div class="ti" style="left:484px;top:0;width:49px;height:40px;"><svg style="left:0;top:0" width="49" height="40" viewBox="484 1040 49 40"><linearGradient id="gm" x1="0" y1="0" x2="0" y2="1"><stop offset="0" stop-color="#1476c8"/><stop offset="1" stop-color="#0a55a6"/></linearGradient><path d="M509 1048.4L521 1055.8H497Z" fill="url(#gm)"/><path d="M497 1055.6H521V1071H497Z" fill="#1c9ce4"/><path d="M521 1055.6V1071L497.6 1055.6Z" fill="#35c1f3"/><path d="M499.6 1056H518.4L509 1063Z" fill="#f2f2f2"/></svg></div>
<div class="ti" style="left:533px;top:0;width:49px;height:40px;"><svg style="left:0;top:0" width="49" height="40" viewBox="533 1040 49 40"><path d="M552.1 1054.6V1051.6Q552.1 1049.9 553.8 1049.9H561.4Q563.1 1049.9 563.1 1051.6V1054.6" fill="none" stroke="#27b4f0" stroke-width="1.8"/><linearGradient id="gst" x1="0" y1="0" x2="0" y2="1"><stop offset="0" stop-color="#ffffff"/><stop offset="1" stop-color="#e4e4e4"/></linearGradient><path d="M546 1053H569V1069Q569 1072 566 1072H549Q546 1072 546 1069Z" fill="url(#gst)"/><rect x="553" y="1058" width="4" height="4" fill="#f25022"/><rect x="558" y="1058" width="4" height="4" fill="#7fba00"/><rect x="553" y="1063" width="4" height="4" fill="#00a4ef"/><rect x="558" y="1063" width="4" height="4" fill="#ffb900"/></svg></div>
<div class="ti" style="left:582px;top:0;width:49px;height:40px;"><svg style="left:0;top:0" width="49" height="40" viewBox="582 1040 49 40"><circle cx="607" cy="1060" r="12" fill="#e84436"/><path d="M607 1060L596.6 1054A12 12 0 0 0 601 1070.4Z" fill="#2da44e"/><path d="M607 1060L596.6 1054A12 12 0 0 0 607 1072L613 1061.6Z" fill="#2da44e"/><path d="M607 1060H619A12 12 0 0 1 607 1072L612.2 1063Z" fill="#fbc116"/><path d="M612.8 1055.6H618.2A12 12 0 0 1 607 1072L612.6 1062.6Z" fill="#fbc116"/><circle cx="607" cy="1060" r="5.6" fill="#fff"/><circle cx="607" cy="1060" r="4.4" fill="#3f86f0"/></svg><div class="run" style="left:5px;width:40px;background:#76b9ed"></div></div>
<div class="ti" style="left:632px;top:0;width:48px;height:40px;background:#b3703c;"><svg style="left:0;top:0" width="48" height="40" viewBox="632 1040 48 40"><rect x="676" y="1040" width="4" height="40" fill="#b86a2c"/><linearGradient id="gs" x1="0" y1="0" x2="0" y2="1"><stop offset="0" stop-color="#ffe000"/><stop offset="1" stop-color="#f2b40a"/></linearGradient><rect x="645" y="1049" width="22" height="22" rx="1.5" fill="url(#gs)"/><path d="M667 1060V1069.5Q667 1071 665.5 1071H656.4Z" fill="#e8a800"/><path d="M666.4 1060L656.4 1070.4V1060Z" fill="#3a3a46"/></svg><div class="run" style="left:0px;width:48px;background:#f7630c"></div></div>
<div class="ti" style="left:680px;top:0;width:49px;height:40px;"><svg style="left:0;top:0" width="49" height="40" viewBox="680 1040 49 40"><circle cx="703.6" cy="1058" r="10" fill="#1badf0"/><circle cx="699.6" cy="1054" r="5.6" fill="#1badf0"/><circle cx="709.4" cy="1064.6" r="6" fill="#1392e0"/><circle cx="704.4" cy="1059.6" r="10" fill="#14a3ea"/><text x="704.4" y="1065.4" text-anchor="middle" font-family="'Liberation Sans',sans-serif" font-weight="700" font-size="15.5" fill="#fff">S</text></svg><div class="run" style="left:5px;width:40px;background:#76b9ed"></div></div>
<div class="ti" style="left:729px;top:0;width:49px;height:40px;"><svg style="left:0;top:0" width="49" height="40" viewBox="729 1040 49 40"><rect x="752" y="1051.2" width="13" height="17.6" fill="#fff" stroke="#1f7244" stroke-width="1"/><path d="M755 1054H764M755 1057H764M755 1060H764M755 1063H764M755 1066H764M758 1052V1068M761.4 1052V1068" stroke="#1f7244" stroke-width=".9" fill="none"/><path d="M742.4 1050.6L756 1048.6V1071.6L742.4 1069.4Z" fill="#1f7244"/><text x="749.2" y="1064.6" text-anchor="middle" font-family="'Liberation Sans',sans-serif" font-weight="700" font-size="11" fill="#fff">X</text></svg><div class="run" style="left:5px;width:40px;background:#76b9ed"></div></div>
<div class="ti" style="left:778px;top:0;width:49px;height:40px;"><svg style="left:0;top:0" width="49" height="40" viewBox="778 1040 49 40"><linearGradient id="gn" x1="0" y1="0" x2="1" y2="1"><stop offset="0" stop-color="#e4f4f8"/><stop offset=".5" stop-color="#a9d5e2"/><stop offset="1" stop-color="#6fb0c6"/></linearGradient><path d="M799.6 1049.6L812.6 1051.6L809.8 1070.4L796 1067.4Z" fill="#dfe7ea" stroke="#b9b9b9" stroke-width=".6"/><path d="M798.6 1049.8L811.4 1051.6L806 1069.8L791 1066Z" fill="url(#gn)"/><path d="M811.8 1054L813.2 1063.6L811.4 1068.4" fill="none" stroke="#b98a3a" stroke-width="1"/></svg><div class="run" style="left:5px;width:40px;background:#76b9ed"></div></div>
<div class="ti" style="left:828px;top:0;width:48px;height:40px;background:#6f6f6f;"><svg style="left:0;top:0" width="48" height="40" viewBox="828 1040 48 40"><rect x="872" y="1040" width="1" height="40" fill="#5a5a5a"/><rect x="873" y="1040" width="3" height="40" fill="#555"/><path d="M851.4 1057.6H842.4V1062A9.4 9.4 0 0 0 861.2 1062V1056" fill="none" stroke="#f0621e" stroke-width="3.6"/><path d="M851.6 1063L858.4 1052.6" stroke="#4b6a26" stroke-width="3.8" stroke-linecap="round" fill="none"/><circle cx="861" cy="1049.4" r="1.9" fill="#4b6a26"/></svg><div class="run" style="left:0px;width:48px;background:#76b9ed"></div></div>
<svg style="left:1488px;top:6px" width="28" height="28" viewBox="1488 1046 28 28" ><path d="M1500.4 1048.2A6.6 6.6 0 1 0 1504 1058.6A7.4 7.4 0 0 1 1500.4 1048.2Z" fill="#f5a01e"/><linearGradient id="gw" x1="0" y1="0" x2="0" y2="1"><stop offset="0" stop-color="#8db2ee"/><stop offset="1" stop-color="#dbe7fa"/></linearGradient><path d="M1494.6 1071A4.6 4.6 0 0 1 1493.4 1062A6.2 6.2 0 0 1 1504.6 1060.2A5.6 5.6 0 0 1 1509.2 1071Z" fill="url(#gw)"/></svg>
<span class="t" style="left:1521.25px;top:12.00px;font-size:15px;color:#fff;transform:scaleX(0.9067);">36°C</span>
<span class="t" style="left:1558.88px;top:12.00px;font-size:15px;color:#fff;transform:scaleX(0.9602);">Mostly cloudy</span>
<svg style="left:1668px;top:10px" width="100" height="20" viewBox="1668 1050 100 20" ><path d="M1671.4 1062.6L1677 1057L1682.6 1062.6" fill="none" stroke="#fff" stroke-width="1.2"/><path d="M1696.6 1065A3.6 3.6 0 0 1 1696.4 1058A5 5 0 0 1 1705.4 1057.4A4 4 0 0 1 1705.8 1065Z" fill="#e8e8e8"/><path d="M1697.8 1057.6A5 5 0 0 1 1705.4 1057.4L1700.2 1060.6Z" fill="#bdbdbd"/><path d="M1721.5 1055.5H1732.5V1063.5H1721.5ZM1724.4 1066.5H1730M1727.2 1063.5V1066.5" fill="none" stroke="#fff" stroke-width="1.1"/><path d="M1717.5 1054.5H1721.5V1057.5H1717.5ZM1719.5 1057.5V1066.5H1721.6" fill="none" stroke="#fff" stroke-width="1"/><path d="M1741.2 1058.4H1743.6L1746.6 1055.2V1065.4L1743.6 1062.2H1741.2Z" fill="none" stroke="#fff" stroke-width="1"/><path d="M1749 1057.6Q1750.8 1060.2 1749 1063M1751.6 1055.6Q1754.6 1060.2 1751.6 1065M1754.2 1053.6Q1758.6 1060.2 1754.2 1067" fill="none" stroke="#fff" stroke-width="1"/></svg>
<span class="t" style="left:1767.04px;top:14.00px;font-size:12px;color:#fff;transform:scaleX(0.9222);">ENG</span>
<span class="t" style="left:1818.00px;top:5.00px;font-size:12px;color:#fff;transform:scaleX(0.9179);">19:53</span>
<span class="t" style="left:1802.32px;top:22.80px;font-size:12px;color:#fff;transform:scaleX(0.9631);">28-04-2023</span>
<svg style="left:1876px;top:10px" width="30" height="28" viewBox="1876 1050 30 28" ><path d="M1879 1052.2H1895V1064H1884.4L1881.6 1066.8V1064H1879Z" fill="#fff"/><path d="M1881.4 1055.4H1892.6M1881.4 1058H1892.6M1881.4 1060.6H1890" stroke="#434343" stroke-width="1" fill="none"/><circle cx="1894.4" cy="1067.8" r="7.8" fill="#434343" stroke="#bcbcbc" stroke-width="1"/></svg>
<span class="t" style="left:1888.68px;top:22.05px;font-size:11.5px;font-weight:700;color:#fff;transform:scaleX(0.9323);">11</span>
<div style="left:1915px;top:0;width:1px;height:40px;background:#8a8a8a"></div>
</div>
</body>
</html>
